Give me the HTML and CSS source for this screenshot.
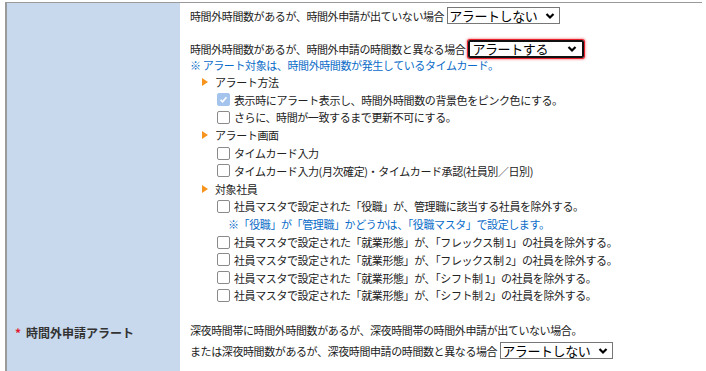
FILE: index.html
```html
<!DOCTYPE html>
<html lang="ja">
<head>
    <meta charset="UTF-8">
    <title>アラート設定</title>
    <link rel="stylesheet" href="styles.css">
</head>
<body>
    <table class="setting">
        <tr>
            <th class="label"></th>
            <td class="value first">
                <div class="line">時間外時間数があるが、時間外申請が出ていない場合<span class="select">アラートしない<svg viewBox="0 0 10 8"><path d="M1.5 2 5 5.5 8.5 2"/></svg></span></div>
                <div class="line second">時間外時間数があるが、時間外申請の時間数と異なる場合<span class="select active">アラートする<svg viewBox="0 0 10 8"><path d="M1.5 2 5 5.5 8.5 2"/></svg></span></div>
                <div class="note">※ アラート対象は、時間外時間数が発生しているタイムカード。</div>
                <ul class="opts">
                    <li class="head">アラート方法</li>
                    <li class="chk"><span class="box checked"><svg viewBox="0 0 13 13"><path d="M3 6.8 5.4 9.2 10 3.8"/></svg></span>表示時にアラート表示し、時間外時間数の背景色をピンク色にする。</li>
                    <li class="chk"><span class="box"></span>さらに、時間が一致するまで更新不可にする。</li>
                    <li class="head">アラート画面</li>
                    <li class="chk"><span class="box"></span>タイムカード入力</li>
                    <li class="chk"><span class="box"></span>タイムカード入力(月次確定)・タイムカード承認(社員別／日別)</li>
                    <li class="head">対象社員</li>
                    <li class="chk"><span class="box"></span>社員マスタで設定された「役職」が、管理職に該当する社員を除外する。</li>
                    <li class="sub">※「役職」が「管理職」かどうかは、「役職マスタ」で設定します。</li>
                    <li class="chk"><span class="box"></span>社員マスタで設定された「就業形態」が、「フレックス制 1」の社員を除外する。</li>
                    <li class="chk"><span class="box"></span>社員マスタで設定された「就業形態」が、「フレックス制 2」の社員を除外する。</li>
                    <li class="chk"><span class="box"></span>社員マスタで設定された「就業形態」が、「シフト制 1」の社員を除外する。</li>
                    <li class="chk"><span class="box"></span>社員マスタで設定された「就業形態」が、「シフト制 2」の社員を除外する。</li>
                </ul>
            </td>
        </tr>
        <tr>
            <th class="label"><span class="req">*</span>時間外申請アラート</th>
            <td class="value last">
                <div class="line">深夜時間帯に時間外時間数があるが、深夜時間帯の時間外申請が出ていない場合。</div>
                <div class="line">または深夜時間数があるが、深夜時間申請の時間数と異なる場合<span class="select">アラートしない<svg viewBox="0 0 10 8"><path d="M1.5 2 5 5.5 8.5 2"/></svg></span></div>
            </td>
        </tr>
    </table>
</body>
</html>
```

FILE: styles.css
```css
*{
    margin: 0;
    padding: 0;
}

body{
    font-family: "Noto Sans CJK JP", sans-serif;
    font-size: 11px;
    letter-spacing: -0.4px;
    color: #222;
    background: #fff;
}

li{
    list-style: none;
}

.setting{
    margin: 2px 0 0 5px;
    width: 697px;
    border-collapse: collapse;
    border-top: 1px solid #9a9a9a;
    border-left: 2px solid #9a9a9a;
}

.label{
    width: 165px;
    background: #c8d9ee;
    text-align: left;
    vertical-align: top;
    font-size: 12px;
    font-weight: bold;
    color: #333;
    letter-spacing: 0;
    padding: 15px 0 0 8px;
}

.req{
    color: #e0182d;
    margin-right: 5px;
}

.value{
    padding-left: 10px;
    vertical-align: top;
}

.first{
    padding-top: 2px;
    padding-bottom: 5px;
}

.last{
    padding-top: 10px;
    padding-bottom: 11px;
}

.line{
    display: flex;
    align-items: center;
    height: 21px;
    white-space: nowrap;
}

.second{
    margin-top: 12px;
}

.select{
    display: inline-flex;
    align-items: center;
    justify-content: space-between;
    width: 106px;
    height: 15px;
    margin-left: 3px;
    padding: 0 4px 0 1px;
    border: 1px solid #777;
    font-family: "Noto Sans CJK JP", sans-serif;
    font-size: 13px;
    letter-spacing: -0.4px;
    color: #000;
    box-sizing: content-box;
}

.select svg{
    width: 10px;
    height: 8px;
    fill: none;
    stroke: #000;
    stroke-width: 2.2;
}

.select.active{
    border: 2px solid #111;
    border-radius: 2px;
    width: 105px;
    height: 14px;
    padding: 0 5px 0 2px;
    box-shadow: 0 0 0 1px #e8232e, 0 0 2px 2px rgba(232, 35, 46, 0.35);
}

.note{
    color: #0a6cc8;
    line-height: 16px;
    margin-top: -2px;
}

.opts li{
    height: 17.8px;
    display: flex;
    align-items: center;
    white-space: nowrap;
}

.head{
    padding-left: 12px;
}

.head::before{
    content: "";
    width: 0;
    height: 0;
    border-top: 4.5px solid transparent;
    border-bottom: 4.5px solid transparent;
    border-left: 6px solid #f7941d;
    margin-right: 7px;
}

.chk{
    padding-left: 27px;
}

.box{
    width: 11px;
    height: 11px;
    border: 1px solid #8a8a8a;
    border-radius: 2px;
    background: #fff;
    margin-right: 4px;
    flex: none;
}

.box.checked{
    background: #a4c4ee;
    border-color: #a4c4ee;
}

.box svg{
    display: block;
    width: 11px;
    height: 11px;
    fill: none;
    stroke: #fff;
    stroke-width: 2;
}

.sub{
    padding-left: 38px;
    color: #0a6cc8;
}
```
